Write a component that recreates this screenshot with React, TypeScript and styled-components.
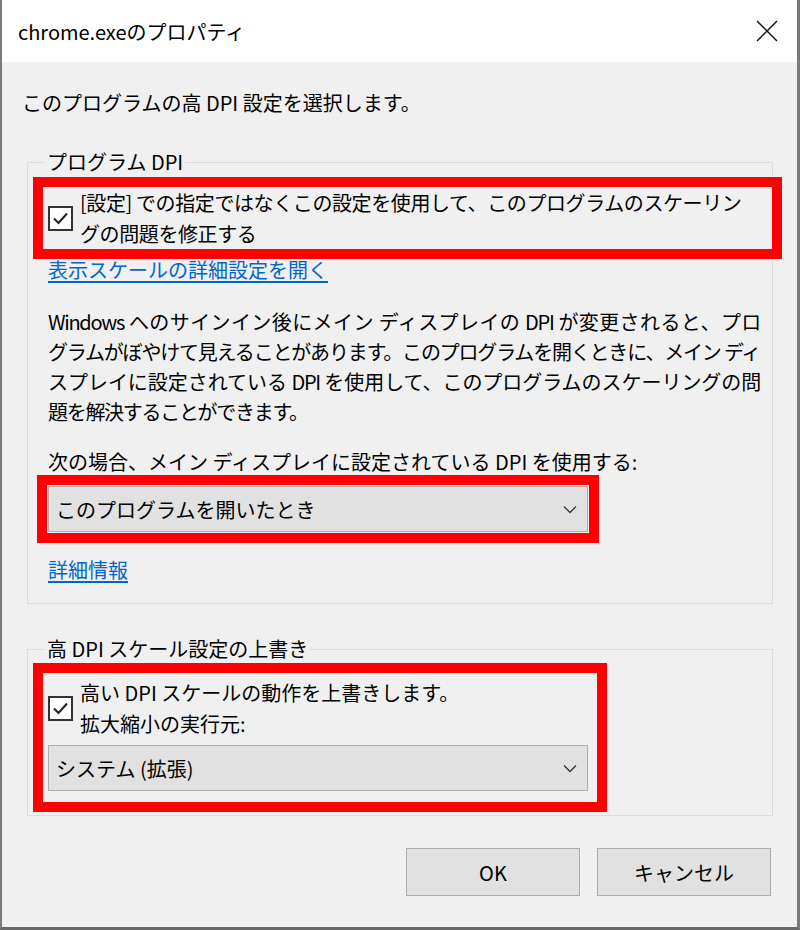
import React from "react";
import styled, {createGlobalStyle} from "styled-components";


const GlobalStyle = createGlobalStyle`
    html, body {
        margin: 0;
        padding: 0;
        background: #f0f0f0;
    }
`;

const Window = styled.div`
    width: 800px;
    height: 930px;
    box-sizing: border-box;
    display: flex;
    flex-direction: column;
    background: #f0f0f0;
    border-left: 2px solid #7a7a7a;
    border-right: 3px solid #7a7a7a;
    border-bottom: 3px solid #6a6a6a;
    font-family: "Noto Sans CJK JP", sans-serif;
    font-size: 20px;
    color: #000;
    overflow: hidden;
`;

const TitleBar = styled.div`
    height: 62px;
    flex: none;
    display: flex;
    align-items: center;
    justify-content: space-between;
    padding: 0 19px 0 16px;
    background: #fff;
`;

const Title = styled.span`
    line-height: 30px;
    margin-top: 2px;
`;

const CloseButton = styled.span`
    display: flex;
    width: 22px;
    height: 22px;
    
    svg {
        stroke: #111;
        stroke-width: 1.5;
    }
`;

const Body = styled.div`
    flex: 1;
    display: flex;
    flex-direction: column;
    padding: 26px 0 0 20px;
`;

const Text = styled.div`
    line-height: 30px;
    white-space: nowrap;
`;

const GroupBox = styled.fieldset<{ $top: number; $bottom: number }>`
    margin: ${p => p.$top}px 24px 0 5px;
    padding: 0 20px ${p => p.$bottom}px 20px;
    border: 1px solid #dcdcdc;
    min-inline-size: 0;
    display: flex;
    flex-direction: column;
    align-items: flex-start;
`;

const GroupTitle = styled.legend`
    padding: 0 2px;
    margin-left: -3px;
    line-height: 30px;
    white-space: nowrap;
`;

const Highlight = styled.div<{ $full?: boolean }>`
    box-sizing: border-box;
    border: 10px solid #ff0000;
    align-self: ${p => (p.$full ? "stretch" : "flex-start")};
`;

const Note = styled.div`
    line-height: 30px;
    white-space: nowrap;
`;

const Paragraph = styled.div`
    width: 712px;
    line-height: 30px;
    letter-spacing: -1.3px;
`;

const Line = styled.span<{ $fill?: boolean }>`
    display: block;
    white-space: nowrap;
    text-align: ${p => (p.$fill ? "justify" : "left")};
    text-align-last: ${p => (p.$fill ? "justify" : "left")};
`;

const Link = styled.a`
    display: block;
    line-height: 30px;
    color: #0066cc;
    text-decoration: underline;
    text-underline-offset: 3px;
    cursor: pointer;
    white-space: nowrap;
`;

const CheckRow = styled.div`
    display: flex;
    align-items: center;
    gap: 7px;
`;

const CheckBox = styled.span`
    flex: none;
    width: 25px;
    height: 25px;
    box-sizing: border-box;
    border: 2px solid #333;
    background: #fff;
    display: flex;
    
    svg {
        fill: none;
        stroke: #222;
        stroke-width: 2;
    }
`;

const CheckLabel = styled.div<{ $tight?: boolean }>`
    line-height: 31px;
    white-space: nowrap;
    letter-spacing: ${p => (p.$tight ? "-0.4px" : "0")};
`;

const ComboBox = styled.div<{ $width: number }>`
    width: ${p => p.$width}px;
    height: 46px;
    box-sizing: border-box;
    display: flex;
    align-items: center;
    justify-content: space-between;
    padding: 0 10px 0 7px;
    background: #e1e1e1;
    border: 1px solid #adadad;
    white-space: nowrap;
    
    svg {
        fill: none;
        stroke: #333;
        stroke-width: 1.3;
    }
`;

const ButtonBar = styled.div`
    display: flex;
    justify-content: flex-end;
    gap: 17px;
    margin-top: 32px;
    padding-right: 26px;
`;

const Button = styled.button`
    width: 174px;
    height: 48px;
    box-sizing: border-box;
    background: #e1e1e1;
    border: 1px solid #adadad;
    font-family: inherit;
    font-size: 20px;
    color: #000;
    padding: 0;
`;


function Check() {
    return (
        <CheckBox>
            <svg width="21" height="21" viewBox="0 0 21 21">
                <polyline points="4,10.5 8.5,15 17,5.5"/>
            </svg>
        </CheckBox>
    );
}

function Chevron() {
    return (
        <svg width="14" height="9" viewBox="0 0 14 9">
            <polyline points="1,1.5 7,7.5 13,1.5"/>
        </svg>
    );
}


export default function App() {
    return (
        <>
            <GlobalStyle/>
            <Window>
                <TitleBar>
                    <Title>chrome.exeのプロパティ</Title>
                    <CloseButton>
                        <svg width="22" height="22" viewBox="0 0 22 22">
                            <line x1="1" y1="1" x2="21" y2="21"/>
                            <line x1="21" y1="1" x2="1" y2="21"/>
                        </svg>
                    </CloseButton>
                </TitleBar>
                <Body>
                    <Text>このプログラムの高 DPI 設定を選択します。</Text>

                    <GroupBox $top={29} $bottom={18}>
                        <GroupTitle>プログラム DPI</GroupTitle>
                        <Highlight $full style={{margin: "0 -30px 0 -15px", padding: "0 5px"}}>
                            <CheckRow>
                                <Check/>
                                <CheckLabel $tight>
                                    [設定] での指定ではなくこの設定を使用して、このプログラムのスケーリン<br/>
                                    グの問題を修正する
                                </CheckLabel>
                            </CheckRow>
                        </Highlight>
                        <Link style={{marginTop: -4}}>表示スケールの詳細設定を開く</Link>
                        <Paragraph style={{marginTop: 22}}>
                            <Line $fill>Windows へのサインイン後にメイン ディスプレイの DPI が変更されると、プロ</Line>
                            <Line $fill>グラムがぼやけて見えることがあります。このプログラムを開くときに、メイン ディ</Line>
                            <Line $fill>スプレイに設定されている DPI を使用して、このプログラムのスケーリングの問</Line>
                            <Line>題を解決することができます。</Line>
                        </Paragraph>
                        <Note style={{marginTop: 20}}>次の場合、メイン ディスプレイに設定されている DPI を使用する:</Note>
                        <Highlight style={{margin: "-2px 0 0 -11px", padding: 1}}>
                            <ComboBox $width={540}>
                                <span>このプログラムを開いたとき</span>
                                <Chevron/>
                            </ComboBox>
                        </Highlight>
                        <Link style={{marginTop: 12}}>詳細情報</Link>
                    </GroupBox>

                    <GroupBox $top={30} $bottom={3}>
                        <GroupTitle>高 DPI スケール設定の上書き</GroupTitle>
                        <Highlight style={{margin: "-1px 0 0 -15px", padding: "4px 9px 11px 5px"}}>
                            <CheckRow>
                                <Check/>
                                <CheckLabel>
                                    高い DPI スケールの動作を上書きします。<br/>
                                    拡大縮小の実行元:
                                </CheckLabel>
                            </CheckRow>
                            <ComboBox $width={540} style={{marginTop: 6}}>
                                <span>システム (拡張)</span>
                                <Chevron/>
                            </ComboBox>
                        </Highlight>
                    </GroupBox>

                    <ButtonBar>
                        <Button>OK</Button>
                        <Button>キャンセル</Button>
                    </ButtonBar>
                </Body>
            </Window>
        </>
    );
}
